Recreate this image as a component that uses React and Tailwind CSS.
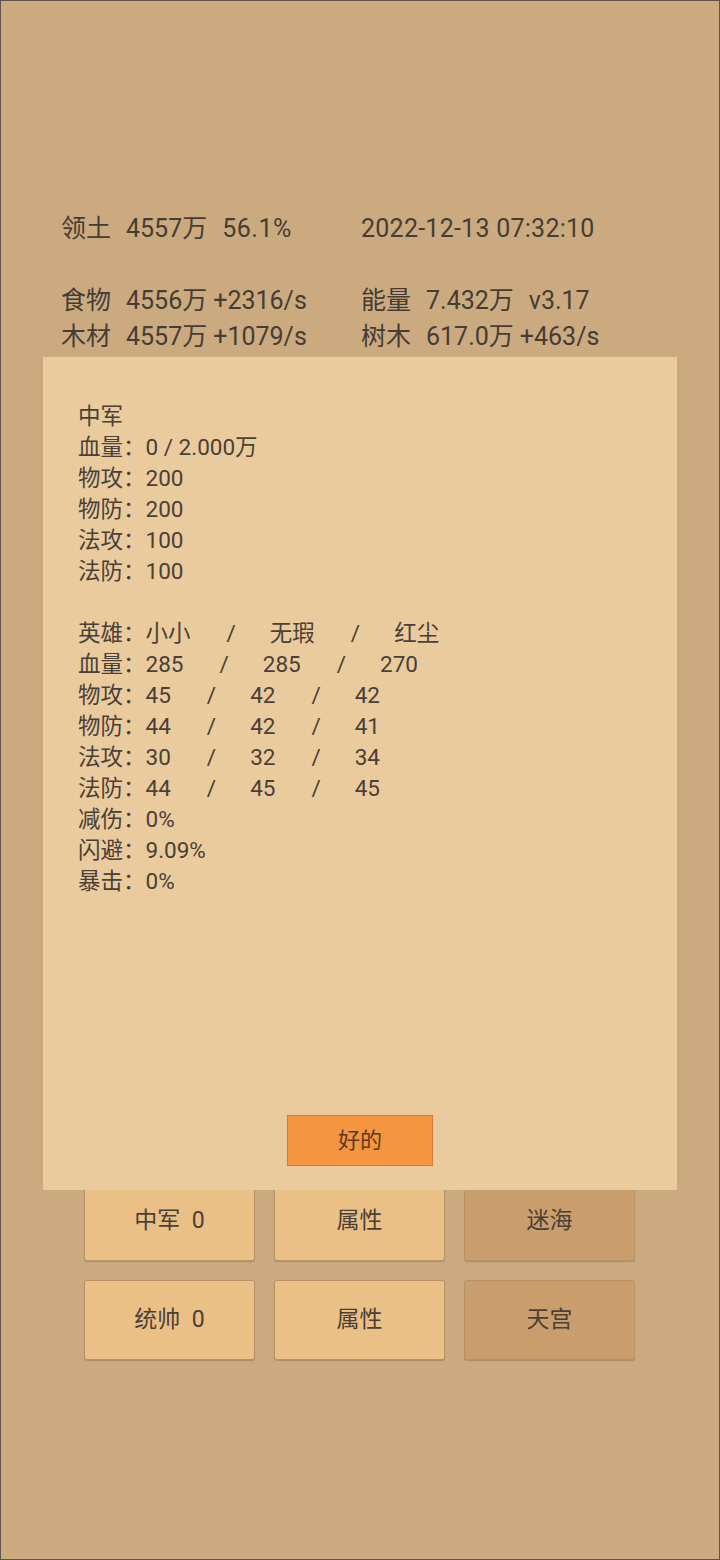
import React from "react";

const font = { fontFamily: 'Roboto, "Noto Sans CJK SC", sans-serif' };

function HeroRow({ label, vals }) {
  return (
    <div className="flex whitespace-pre">
      <span>{label}：</span>
      <span>{vals[0]}</span>
      <span className="ml-[36px]">/</span>
      <span className="ml-[34px]">{vals[1]}</span>
      <span className="ml-[36px]">/</span>
      <span className="ml-[34px]">{vals[2]}</span>
    </div>
  );
}

function Btn({ children, dark }) {
  return (
    <div
      className={
        "flex h-[80px] items-center justify-center whitespace-pre rounded-[3px] border border-[#b8936a] text-[23px] text-[#4a4037] shadow-[0_1px_1px_rgba(120,90,50,0.35)] " +
        (dark ? "bg-[#c99e6c]" : "bg-[#ebc086]")
      }
    >
      {children}
    </div>
  );
}

function Stat({ label, a, b, gap }) {
  return (
    <div className="flex whitespace-pre">
      <span>{label}</span>
      <span className="ml-[15px]">{a}</span>
      <span className={gap}>{b}</span>
    </div>
  );
}

export default function App() {
  return (
    <div
      style={font}
      className="relative h-[1560px] w-[720px] overflow-hidden border border-[#5c5650] bg-[#cbaa80] text-[#453d35]"
    >
      <div className="pl-[60px] pt-[210px] text-[25px] leading-[36px]">
        <div className="grid grid-cols-[300px_1fr]">
          <Stat label="领土" a="4557万" b="56.1%" gap="ml-[15px] tracking-[0.5px]" />
          <div className="tracking-[0.25px]">2022-12-13 07:32:10</div>
          <div className="h-[36px]" />
          <div />
          <Stat label="食物" a="4556万" b="+2316/s" gap="ml-[6px]" />
          <Stat label="能量" a="7.432万" b="v3.17" gap="ml-[15px]" />
          <Stat label="木材" a="4557万" b="+1079/s" gap="ml-[6px]" />
          <Stat label="树木" a="617.0万" b="+463/s" gap="ml-[6px]" />
        </div>
      </div>

      <div className="mt-[826px] grid grid-cols-[171px_171px_171px] gap-x-[19px] gap-y-[19px] pl-[83px]">
        <Btn>中军  0</Btn>
        <Btn>属性</Btn>
        <Btn dark>迷海</Btn>
        <Btn>统帅  0</Btn>
        <Btn>属性</Btn>
        <Btn dark>天宫</Btn>
      </div>

      <div className="absolute left-[42px] top-[356px] flex h-[833px] w-[634px] flex-col bg-[#eacb9e] pl-[35px] pt-[44px] text-[22.5px] leading-[31px] text-[#4a4037]">
        <div>中军</div>
        <div>血量：0 / 2.000万</div>
        <div>物攻：200</div>
        <div>物防：200</div>
        <div>法攻：100</div>
        <div>法防：100</div>
        <div className="h-[31px]" />
        <HeroRow label="英雄" vals={["小小", "无瑕", "红尘"]} />
        <HeroRow label="血量" vals={["285", "285", "270"]} />
        <HeroRow label="物攻" vals={["45", "42", "42"]} />
        <HeroRow label="物防" vals={["44", "42", "41"]} />
        <HeroRow label="法攻" vals={["30", "32", "34"]} />
        <HeroRow label="法防" vals={["44", "45", "45"]} />
        <div>减伤：0%</div>
        <div>闪避：9.09%</div>
        <div>暴击：0%</div>
        <div className="mt-auto mb-[24px] flex justify-center pr-[35px]">
          <div className="flex h-[51px] w-[146px] items-center justify-center border border-[#d27b33] bg-[#f5953f] text-[22px] text-[#5a3a20]">
            好的
          </div>
        </div>
      </div>
    </div>
  );
}
